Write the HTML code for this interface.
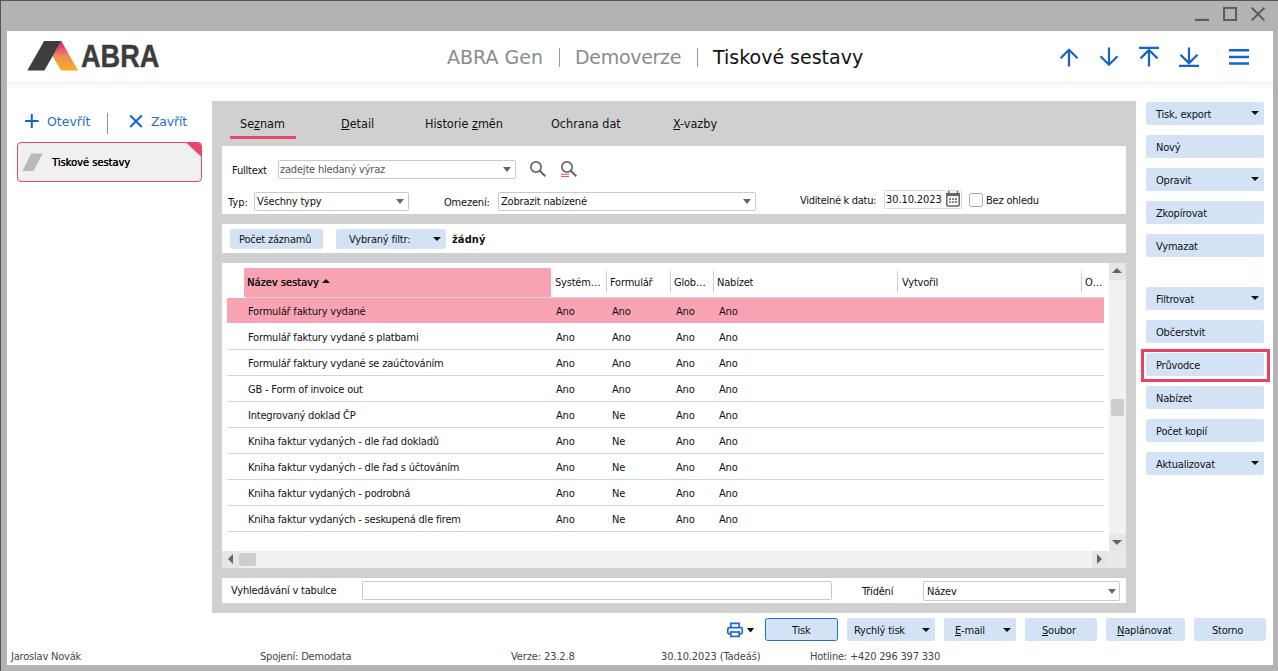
<!DOCTYPE html>
<html lang="cs">
<head>
<meta charset="utf-8">
<title>ABRA Gen - Tiskové sestavy</title>
<style>
*{box-sizing:border-box;margin:0;padding:0}
html,body{width:1278px;height:671px;overflow:hidden;background:#b3b3b3}
body{position:relative;font-family:"Liberation Sans",sans-serif;font-size:11px;color:#000}
.abs,.abs-all *{position:absolute}
#frame{position:absolute;left:0;top:0;width:1278px;height:671px;background:#b3b3b3;border-top:1px solid #555;border-left:1px solid #555}
#win{position:absolute;left:7px;top:31px;width:1266px;height:634px;background:#fff;overflow:hidden}
/* coordinates inside #win are offset by (7,31) -> use wrapper with negative offset */
#w{position:absolute;left:-7px;top:-31px;width:1278px;height:671px}
#w *{position:absolute}
.t{white-space:nowrap;line-height:14px;height:14px}
.ui{font-family:"DejaVu Sans Condensed","Liberation Sans",sans-serif;font-size:11px;letter-spacing:-0.2px;color:#111;margin-top:1px}
.vd{font-family:"DejaVu Sans","Liberation Sans",sans-serif}
.btn{background:#d3e3f5;border-radius:2.500px}
.btn .t{top:4px}
u{position:static!important;text-decoration:underline}
.combo{background:#fff;border:1px solid #c9c9c9;border-radius:1.500px}
.arr{width:0;height:0;border-left:4px solid transparent;border-right:4px solid transparent;border-top:4.500px solid #111}
.arrg{width:0;height:0;border-left:4.500px solid transparent;border-right:4.500px solid transparent;border-top:5.500px solid #666}
.hl{height:1px;background:#d4d4d4;left:227px;width:877px}
.vs{width:1px;background:#cfcfcf;top:271px;height:22px}
</style>
</head>
<body>
<div id="frame"></div>

<!-- window controls -->
<svg class="abs" style="position:absolute;left:1190px;top:2px" width="80" height="24" viewBox="0 0 80 24" fill="none" stroke="#5c5c5c">
  <path d="M5 17.900H19" stroke-width="2.200"/>
  <rect x="34.050" y="5.900" width="12" height="12.100" stroke-width="2"/>
  <path d="M61.700 5.700L74.400 18.400M74.400 5.700L61.700 18.400" stroke-width="2"/>
</svg>

<div id="win"><div id="w">

<!-- header -->
<div style="left:7px;top:81px;width:1266px;height:8px;background:linear-gradient(#f5f5f5,#fff)"></div>
<svg style="left:26px;top:40px" width="54" height="32" viewBox="0 0 54 32">
  <defs><linearGradient id="lg" x1="0" y1="0" x2="0" y2="1">
    <stop offset="0" stop-color="#e3007b"/><stop offset="0.12" stop-color="#e52d7c"/><stop offset="0.5" stop-color="#f08a5c"/><stop offset="1" stop-color="#f8b01c"/>
  </linearGradient></defs>
  <path d="M35.300 0.900L52.100 30.600H35.100L26.500 16Z" fill="url(#lg)"/>
  <path d="M18.100 0.900H35.300L18.400 30.600H1.300Z" fill="#3e3e3e"/>
</svg>
<div class="t" style="left:81px;top:38px;font:bold 30.500px/36px 'Liberation Sans',sans-serif;height:36px;color:#3c3c3c;transform:scaleX(0.89);transform-origin:0 0;-webkit-text-stroke:0.4px #3c3c3c">ABRA</div>

<div class="t vd" style="left:447px;top:45px;font-size:19px;line-height:24px;height:24px;color:#8c8c8c">ABRA Gen</div>
<div style="left:559px;top:48px;width:1px;height:19px;background:#9a9a9a"></div>
<div class="t vd" style="left:575px;top:45px;font-size:19px;line-height:24px;height:24px;color:#8c8c8c;letter-spacing:-0.3px">Demoverze</div>
<div style="left:697px;top:48px;width:1px;height:19px;background:#9a9a9a"></div>
<div class="t vd" style="left:713px;top:45px;font-size:19px;line-height:24px;height:24px;color:#111">Tiskové sestavy</div>

<svg style="left:1055px;top:44px" width="200" height="26" viewBox="0 0 200 26" fill="none" stroke="#1565c8" stroke-width="2.250">
  <path d="M14 22.5V6M5.5 14.2L14 5.8L22.5 14.2"/>
  <path d="M54 3.5V20M45.5 12.3L54 20.7L62.5 12.3"/>
  <path d="M84 3.900H104M94 22.500V6M85.500 14.400L94 6L102.500 14.400"/>
  <path d="M124 21.900H144M134 3.500V18.500M125.500 10.700L134 19.100L142.500 10.700"/>
  <path d="M174 6.300H194M174 12.900H194M174 19.500H194" stroke-width="2.500"/>
</svg>

<!-- left sidebar -->
<svg style="left:24px;top:113px" width="16" height="16" viewBox="0 0 16 16" fill="none" stroke="#1565c8" stroke-width="2"><path d="M7.800 1V15M1 8H14.600"/></svg>
<div class="t vd" style="left:47px;top:114px;font-size:12.5px;line-height:16px;height:16px;color:#1f6fd0">Otevřít</div>
<div style="left:107px;top:113px;width:1px;height:21px;background:#8c8cc0"></div>
<svg style="left:128px;top:113px" width="16" height="16" viewBox="0 0 16 16" fill="none" stroke="#1565c8" stroke-width="2"><path d="M2.200 2.500L13.800 14M13.800 2.500L2.200 14"/></svg>
<div class="t vd" style="left:151px;top:114px;font-size:12.5px;line-height:16px;height:16px;color:#1f6fd0;letter-spacing:-0.200px">Zavřít</div>

<div style="left:17px;top:142px;width:185px;height:40px;background:#f0f0f0;border:1px solid #e8476a;border-radius:4px;overflow:hidden">
  <svg style="left:0;top:0" width="185" height="40" viewBox="0 0 185 40">
    <path d="M168.500 0H185V15.500Z" fill="#e8476a"/>
    <path d="M13 10.500H24.500L15.500 28H4.500Z" fill="#b9b9b9"/>
  </svg>
  <div class="t ui" style="left:34px;top:12px;color:#000;letter-spacing:0;text-shadow:0.300px 0 0 #000">Tiskové sestavy</div>
</div>

<!-- main gray panel -->
<div style="left:212px;top:101px;width:924px;height:512px;background:#d0d0d0"></div>

<!-- tabs -->
<div class="t ui" style="left:240px;top:116px;font-size:12.500px;letter-spacing:0;margin-top:0;line-height:16px;height:16px">Se<u>z</u>nam</div>
<div style="left:230px;top:136px;width:66px;height:3px;background:#e8476a"></div>
<div class="t ui" style="left:341px;top:116px;font-size:12.500px;letter-spacing:0;margin-top:0;line-height:16px;height:16px"><u>D</u>etail</div>
<div class="t ui" style="left:425px;top:116px;font-size:12.500px;letter-spacing:0;margin-top:0;line-height:16px;height:16px">Historie <u>z</u>měn</div>
<div class="t ui" style="left:551px;top:116px;font-size:12.500px;letter-spacing:0;margin-top:0;line-height:16px;height:16px">Ochrana dat</div>
<div class="t ui" style="left:673px;top:116px;font-size:12.500px;letter-spacing:0;margin-top:0;line-height:16px;height:16px"><u>X</u>-vazby</div>

<!-- filter panel -->
<div style="left:222px;top:146px;width:904px;height:68px;background:#fff"></div>
<div class="t ui" style="left:232px;top:163px">Fulltext</div>
<div class="combo" style="left:278px;top:160px;width:238px;height:19px"></div>
<div class="t ui" style="left:280px;top:162px;color:#555">zadejte hledaný výraz</div>
<div class="arrg" style="left:503px;top:167px"></div>
<svg style="left:528px;top:160px" width="52" height="20" viewBox="0 0 52 20" fill="none" stroke="#666" stroke-width="1.700">
  <circle cx="8" cy="7" r="5.150"/><path d="M11.700 10.700L17.300 16.300" stroke-width="2"/>
  <circle cx="39" cy="7" r="5.150"/><path d="M42.700 10.700L48.300 16.300" stroke-width="2"/>
  <path d="M33 14.300H41M33 16.600H41" stroke="#e8476a" stroke-width="1"/>
</svg>

<div class="t ui" style="left:228px;top:195px;letter-spacing:0">Typ:</div>
<div class="combo" style="left:254px;top:192px;width:155px;height:19px"></div>
<div class="t ui" style="left:257px;top:194px">Všechny typy</div>
<div class="arrg" style="left:396px;top:199px"></div>

<div class="t ui" style="left:444px;top:195px">Omezení:</div>
<div class="combo" style="left:498px;top:192px;width:258px;height:19px"></div>
<div class="t ui" style="left:501px;top:194px">Zobrazit nabízené</div>
<div class="arrg" style="left:743px;top:199px"></div>

<div class="t ui" style="left:800px;top:193px;letter-spacing:-0.300px">Viditelné k datu:</div>
<div class="combo" style="left:884px;top:190px;width:78px;height:19px;border-color:#d8d8d8"></div>
<div class="t ui" style="left:886px;top:192px;letter-spacing:-0.100px">30.10.2023</div>
<svg style="left:945px;top:190px" width="16" height="18" viewBox="0 0 16 18">
  <rect x="1.750" y="3.650" width="12.500" height="12.400" rx="1.200" fill="#fff" stroke="#666" stroke-width="1.500"/>
  <rect x="1" y="2.900" width="14" height="3.200" fill="#666"/>
  <rect x="3" y="1" width="1.400" height="2.500" fill="#666"/><rect x="11.700" y="1" width="1.400" height="2.500" fill="#666"/>
  <rect x="4.200" y="8.200" width="1.700" height="1.700" fill="#555"/><rect x="7.200" y="8.200" width="1.700" height="1.700" fill="#555"/><rect x="10.200" y="8.200" width="1.700" height="1.700" fill="#555"/>
  <rect x="4.200" y="11.200" width="1.700" height="1.700" fill="#555"/><rect x="7.200" y="11.200" width="1.700" height="1.700" fill="#555"/><rect x="10.200" y="11.200" width="1.700" height="1.700" fill="#555"/>
</svg>
<div style="left:969px;top:193px;width:14px;height:14px;border:1px solid #a8a8a8;border-radius:2.500px;background:#fff"></div>
<div class="t ui" style="left:986px;top:193px">Bez ohledu</div>

<!-- filter row -->
<div style="left:222px;top:224px;width:904px;height:29px;background:#fff"></div>
<div class="btn" style="left:230px;top:229px;width:93px;height:20px"><div class="t ui" style="left:9px;top:3px">Počet záznamů</div></div>
<div class="btn" style="left:336px;top:229px;width:110px;height:20px"><div class="t ui" style="left:13px;top:3px">Vybraný filtr:</div><div class="arr" style="left:97px;top:8px"></div></div>
<div class="t ui" style="left:452px;top:232px;font-weight:bold;font-size:11px;letter-spacing:0.100px">žádný</div>

<!-- table -->
<div style="left:222px;top:263px;width:904px;height:305px;background:#fff"></div>
<div style="left:244px;top:268px;width:307px;height:29px;background:#f7a3b3"></div>
<div style="left:227px;top:298px;width:877px;height:25px;background:#f7a3b3"></div>
<div style="left:246px;top:297px;width:858px;height:1px;background:#dcd2d5"></div>
<div class="t ui" style="left:247px;top:275px;letter-spacing:0;text-shadow:0.200px 0 0 #111">Název sestavy</div>
<div style="left:322px;top:279px;width:0;height:0;border-left:4px solid transparent;border-right:4px solid transparent;border-bottom:4px solid #111"></div>
<div class="t ui" style="left:555px;top:275px">Systém…</div>
<div class="vs" style="left:606px"></div>
<div class="t ui" style="left:610px;top:275px">Formulář</div>
<div class="vs" style="left:670px"></div>
<div class="t ui" style="left:674px;top:275px">Glob…</div>
<div class="vs" style="left:713px"></div>
<div class="t ui" style="left:717px;top:275px">Nabízet</div>
<div class="vs" style="left:897px"></div>
<div class="t ui" style="left:902px;top:275px">Vytvořil</div>
<div class="vs" style="left:1081px"></div>
<div class="t ui" style="left:1085px;top:275px">O…</div>

<!--ROWS-->
<div class="t ui" style="left:248px;top:304px">Formulář faktury vydané</div>
<div class="t ui" style="left:556px;top:304px">Ano</div>
<div class="t ui" style="left:612px;top:304px">Ano</div>
<div class="t ui" style="left:676px;top:304px">Ano</div>
<div class="t ui" style="left:719px;top:304px">Ano</div>
<div class="t ui" style="left:248px;top:330px">Formulář faktury vydané s platbami</div>
<div class="t ui" style="left:556px;top:330px">Ano</div>
<div class="t ui" style="left:612px;top:330px">Ano</div>
<div class="t ui" style="left:676px;top:330px">Ano</div>
<div class="t ui" style="left:719px;top:330px">Ano</div>
<div class="hl" style="top:349px"></div>
<div class="t ui" style="left:248px;top:356px">Formulář faktury vydané se zaúčtováním</div>
<div class="t ui" style="left:556px;top:356px">Ano</div>
<div class="t ui" style="left:612px;top:356px">Ano</div>
<div class="t ui" style="left:676px;top:356px">Ano</div>
<div class="t ui" style="left:719px;top:356px">Ano</div>
<div class="hl" style="top:375px"></div>
<div class="t ui" style="left:248px;top:382px">GB - Form of invoice out</div>
<div class="t ui" style="left:556px;top:382px">Ano</div>
<div class="t ui" style="left:612px;top:382px">Ano</div>
<div class="t ui" style="left:676px;top:382px">Ano</div>
<div class="t ui" style="left:719px;top:382px">Ano</div>
<div class="hl" style="top:401px"></div>
<div class="t ui" style="left:248px;top:408px">Integrovaný doklad ČP</div>
<div class="t ui" style="left:556px;top:408px">Ano</div>
<div class="t ui" style="left:612px;top:408px">Ne</div>
<div class="t ui" style="left:676px;top:408px">Ano</div>
<div class="t ui" style="left:719px;top:408px">Ano</div>
<div class="hl" style="top:427px"></div>
<div class="t ui" style="left:248px;top:434px">Kniha faktur vydaných - dle řad dokladů</div>
<div class="t ui" style="left:556px;top:434px">Ano</div>
<div class="t ui" style="left:612px;top:434px">Ne</div>
<div class="t ui" style="left:676px;top:434px">Ano</div>
<div class="t ui" style="left:719px;top:434px">Ano</div>
<div class="hl" style="top:453px"></div>
<div class="t ui" style="left:248px;top:460px">Kniha faktur vydaných - dle řad s účtováním</div>
<div class="t ui" style="left:556px;top:460px">Ano</div>
<div class="t ui" style="left:612px;top:460px">Ne</div>
<div class="t ui" style="left:676px;top:460px">Ano</div>
<div class="t ui" style="left:719px;top:460px">Ano</div>
<div class="hl" style="top:479px"></div>
<div class="t ui" style="left:248px;top:486px">Kniha faktur vydaných - podrobná</div>
<div class="t ui" style="left:556px;top:486px">Ano</div>
<div class="t ui" style="left:612px;top:486px">Ne</div>
<div class="t ui" style="left:676px;top:486px">Ano</div>
<div class="t ui" style="left:719px;top:486px">Ano</div>
<div class="hl" style="top:505px"></div>
<div class="t ui" style="left:248px;top:512px">Kniha faktur vydaných - seskupená dle firem</div>
<div class="t ui" style="left:556px;top:512px">Ano</div>
<div class="t ui" style="left:612px;top:512px">Ne</div>
<div class="t ui" style="left:676px;top:512px">Ano</div>
<div class="t ui" style="left:719px;top:512px">Ano</div>
<div class="hl" style="top:531px"></div>
<!--/ROWS-->

<!-- scrollbars -->
<div style="left:1109px;top:263px;width:17px;height:288px;background:#f1f1f1"></div>
<div style="left:1109px;top:263px;width:17px;height:17px;background:#e6e6e6"></div>
<div style="left:1112px;top:268px;width:0;height:0;border-left:5px solid transparent;border-right:5px solid transparent;border-bottom:5.500px solid #646464"></div>
<div style="left:1109px;top:534px;width:17px;height:17px;background:#e6e6e6"></div>
<div style="left:1112px;top:540px;width:0;height:0;border-left:5px solid transparent;border-right:5px solid transparent;border-top:5.500px solid #646464"></div>
<div style="left:1111px;top:399px;width:13px;height:17px;background:#cdcdcd;border-radius:2px"></div>
<div style="left:222px;top:551px;width:904px;height:17px;background:#f1f1f1"></div>
<div style="left:222px;top:551px;width:17px;height:17px;background:#e6e6e6"></div>
<div style="left:1109px;top:551px;width:17px;height:17px;background:#e9e9e9"></div>
<div style="left:1092px;top:551px;width:17px;height:17px;background:#e6e6e6"></div>
<div style="left:228px;top:554px;width:0;height:0;border-top:5px solid transparent;border-bottom:5px solid transparent;border-right:5.500px solid #646464"></div>
<div style="left:1097px;top:554px;width:0;height:0;border-top:5px solid transparent;border-bottom:5px solid transparent;border-left:5.500px solid #646464"></div>
<div style="left:239px;top:553px;width:17px;height:13px;background:#cdcdcd;border-radius:2px"></div>

<!-- search row -->
<div style="left:222px;top:578px;width:904px;height:25px;background:#fff"></div>
<div class="t ui" style="left:231px;top:583px">Vyhledávání v tabulce</div>
<div class="combo" style="left:362px;top:581px;width:470px;height:19px"></div>
<div class="t ui" style="left:862px;top:584px">Třídění</div>
<div class="combo" style="left:923px;top:581px;width:197px;height:20px"></div>
<div class="t ui" style="left:927px;top:584px">Název</div>
<div class="arrg" style="left:1107.500px;top:588.500px"></div>

<!-- right buttons -->
<!--RB-->
<div class="btn" style="left:1146px;top:102px;width:118px;height:23px"><div class="t ui" style="left:10px;top:5px">Tisk, export</div><div class="arr" style="left:105px;top:9px"></div></div>
<div class="btn" style="left:1146px;top:135px;width:118px;height:23px"><div class="t ui" style="left:10px;top:5px">Nový</div></div>
<div class="btn" style="left:1146px;top:168px;width:118px;height:23px"><div class="t ui" style="left:10px;top:5px">Opravit</div><div class="arr" style="left:105px;top:9px"></div></div>
<div class="btn" style="left:1146px;top:201px;width:118px;height:23px"><div class="t ui" style="left:10px;top:5px">Zkopírovat</div></div>
<div class="btn" style="left:1146px;top:234px;width:118px;height:23px"><div class="t ui" style="left:10px;top:5px">Vymazat</div></div>
<div class="btn" style="left:1146px;top:287px;width:118px;height:23px"><div class="t ui" style="left:10px;top:5px">Filtrovat</div><div class="arr" style="left:105px;top:9px"></div></div>
<div class="btn" style="left:1146px;top:320px;width:118px;height:23px"><div class="t ui" style="left:10px;top:5px">Občerstvit</div></div>
<div class="btn" style="left:1146px;top:353px;width:118px;height:23px"><div class="t ui" style="left:10px;top:5px">Průvodce</div></div>
<div class="btn" style="left:1146px;top:386px;width:118px;height:23px"><div class="t ui" style="left:10px;top:5px">Nabízet</div></div>
<div class="btn" style="left:1146px;top:419px;width:118px;height:23px"><div class="t ui" style="left:10px;top:5px">Počet kopií</div></div>
<div class="btn" style="left:1146px;top:452px;width:118px;height:23px"><div class="t ui" style="left:10px;top:5px">Aktualizovat</div><div class="arr" style="left:105px;top:9px"></div></div>
<!--/RB-->
<div style="left:1141px;top:349px;width:129px;height:33px;border:3px solid #ec3f63"></div>

<!-- bottom buttons -->
<svg style="left:726px;top:620px" width="30" height="20" viewBox="0 0 30 20" fill="none" stroke="#1b6ad0" stroke-width="1.700">
  <path d="M4.800 7.700V3.300H13.200V7.700"/><rect x="1.750" y="7.700" width="14.500" height="6.200" rx="1.600"/><rect x="4.800" y="12" width="8.400" height="4.400" fill="#fff"/>
  <path d="M20.900 8H28.200L24.550 12.600Z" fill="#111" stroke="none"/>
</svg>
<div class="btn" style="left:765px;top:618px;width:73px;height:23px;border:1px solid #1f6fd0"><div class="t ui" style="left:26px;top:4px">Tisk</div></div>
<div class="btn" style="left:847px;top:618px;width:88px;height:23px"><div class="t ui" style="left:7px;top:5px">Rychlý tisk</div><div class="arr" style="left:75px;top:10px"></div></div>
<div class="btn" style="left:944px;top:618px;width:72px;height:23px"><div class="t ui" style="left:11px;top:5px"><u>E</u>-mail</div><div class="arr" style="left:59px;top:10px"></div></div>
<div class="btn" style="left:1025px;top:618px;width:72px;height:23px"><div class="t ui" style="left:17px;top:5px"><u>S</u>oubor</div></div>
<div class="btn" style="left:1106px;top:618px;width:79px;height:23px"><div class="t ui" style="left:11px;top:5px"><u>N</u>aplánovat</div></div>
<div class="btn" style="left:1194px;top:618px;width:72px;height:23px"><div class="t ui" style="left:18px;top:5px">Storno</div></div>

<!-- status bar -->
<div class="t ui" style="left:11px;top:649px;color:#454545">Jaroslav Novák</div>
<div class="t ui" style="left:260px;top:649px;color:#454545">Spojení: Demodata</div>
<div class="t ui" style="left:511px;top:649px;color:#454545;letter-spacing:-0.120px">Verze: 23.2.8</div>
<div class="t ui" style="left:661px;top:649px;color:#454545;letter-spacing:-0.100px">30.10.2023 (Tadeáš)</div>
<div class="t ui" style="left:810px;top:649px;color:#454545">Hotline: +420 296 397 330</div>

</div></div>
</body>
</html>
